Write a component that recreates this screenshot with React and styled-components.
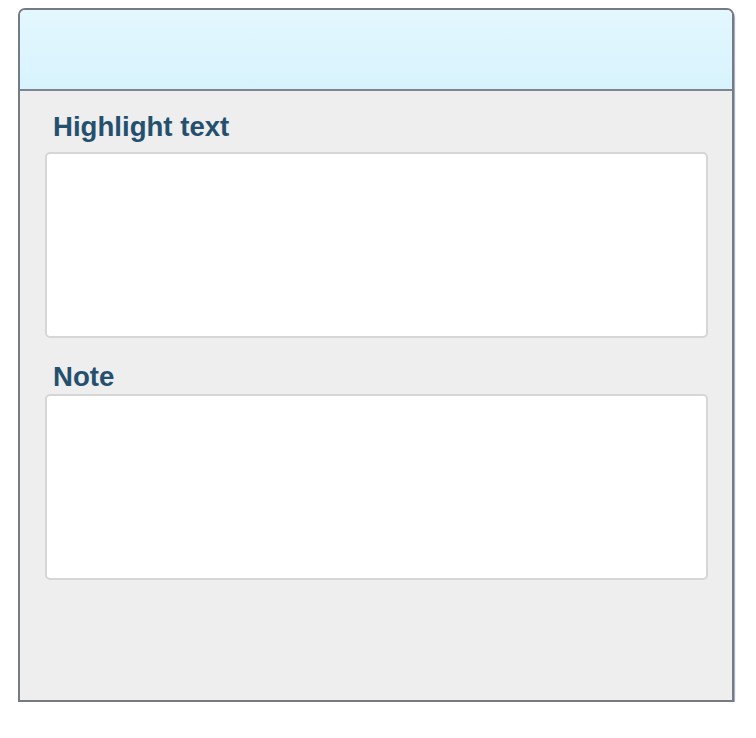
import React from 'react';
import styled, { createGlobalStyle } from 'styled-components';

const GlobalStyle = createGlobalStyle`
  html, body {
    margin: 0;
    padding: 0;
    background: #ffffff;
  }
  body {
    font-family: "Liberation Sans", Arial, sans-serif;
  }
`;

function App() {
  return (
    <PageStyled>
      <GlobalStyle />
      <PanelStyled>
        <div className="header" />
        <div className="content">
          <Label>Highlight text</Label>
          <Field />
          <Label $gap="23px" $bottom="2px">Note</Label>
          <Field />
        </div>
      </PanelStyled>
    </PageStyled>
  );
}

const PageStyled = styled.div`
  padding: 8px 0 0 18px;
`;

const PanelStyled = styled.div`
  box-sizing: border-box;
  width: 716px;
  height: 694px;
  border: 2px solid #747b84;
  border-radius: 7px 7px 0 0;
  background-color: #eeeeee;
  box-shadow: 1px 2px 1px rgba(110, 130, 160, 0.7);
  display: flex;
  flex-direction: column;
  overflow: hidden;
  .header {
    height: 79px;
    flex-shrink: 0;
    background: linear-gradient(to bottom, #e3f7fe, #d8f3fd);
    border-bottom: 2px solid #7e868d;
  }
  .content {
    padding: 20px 25px 0 25px;
    display: flex;
    flex-direction: column;
  }
`;

const Label = styled.label`
  display: block;
  margin-top: ${(p) => p.$gap || '0'};
  margin-bottom: ${(p) => p.$bottom || '10px'};
  padding-left: 8px;
  font-family: "Liberation Sans", Arial, sans-serif;
  font-size: 27.6px;
  line-height: 31px;
  font-weight: bold;
  color: #24506e;
`;

const Field = styled.textarea`
  box-sizing: border-box;
  width: 663px;
  height: 186px;
  margin: 0;
  padding: 6px;
  border: 2px solid #d6d6d6;
  border-radius: 5px;
  background: #ffffff;
  resize: none;
  outline: none;
  font-family: "Liberation Sans", Arial, sans-serif;
  font-size: 16px;
`;

export default App;
